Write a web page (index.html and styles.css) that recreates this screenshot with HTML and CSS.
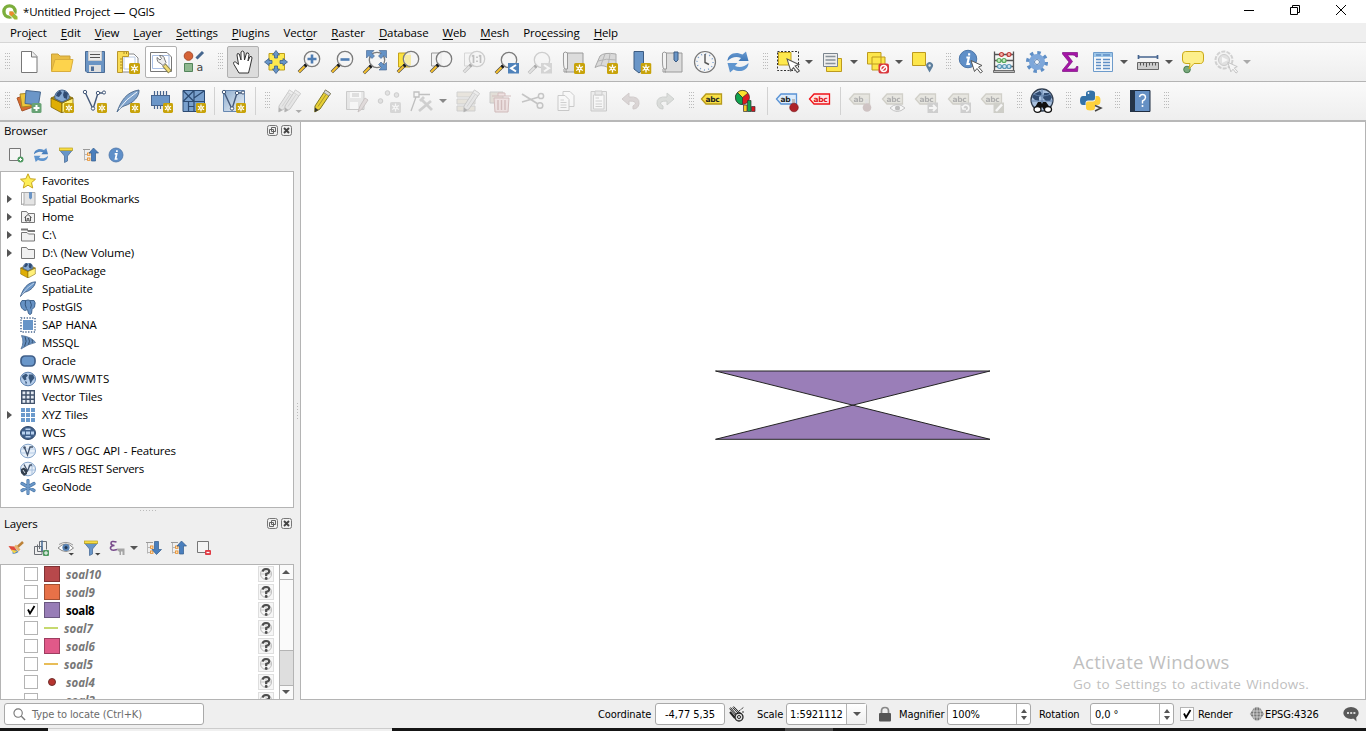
FILE: index.html
```html
<!DOCTYPE html>
<html lang="en">
<head>
<meta charset="utf-8">
<title>*Untitled Project — QGIS</title>
<link rel="stylesheet" href="styles.css">
</head>
<body>
<svg class="defs" width="0" height="0">
  <defs>
    <linearGradient id="gPaper" x1="0" y1="0" x2="1" y2="1"><stop offset="0" stop-color="#8fadcf"/><stop offset="1" stop-color="#eef3f8"/></linearGradient>
    <linearGradient id="gSync" x1="0" y1="0" x2="0" y2="1"><stop offset="0" stop-color="#6a9bd1"/><stop offset="1" stop-color="#3f78b8"/></linearGradient>
  </defs>
  <symbol id="new-badge" viewBox="0 0 11 11"><rect width="11" height="11" rx="1.6" fill="#c8a30a"/><path d="M5.5 1.6v7.8M2.1 3.5l6.8 4M2.1 7.5l6.8-4" stroke="#fff" stroke-width="1.3"/><circle cx="5.5" cy="5.5" r="1.9" fill="#fff"/><circle cx="5.5" cy="5.5" r=".8" fill="#c8a30a"/></symbol>
  <symbol id="lens" viewBox="0 0 24 24"><path d="M8.5 15.500L1.800 22.200" stroke="#444" stroke-width="3.200"/><path d="M7.500 16.500L2 22" stroke="#f6c12e" stroke-width="2"/><path d="M10.500 13.500L8 16" stroke="#111" stroke-width="3.200"/><circle cx="15" cy="9" r="7.700" fill="#f4f4f4" fill-opacity=".85" stroke="#7c7c7c" stroke-width="1.300"/></symbol>
  <symbol id="sync" viewBox="0 0 24 24"><path d="M1.500 11C1.500 4.500 9 .500 16.500 4.500L20 1.500L22.500 11H12.500L15 8C10.500 6 5.500 7 1.500 11Z" fill="url(#gSync)"/><path d="M22.500 13C22.500 19.500 15 23.500 7.500 19.500L4 22.500L1.500 13H11.500L9 16C13.500 18 18.500 17 22.500 13Z" fill="#5f95cf"/></symbol>
  <symbol id="globe" viewBox="0 0 16 16"><ellipse cx="8" cy="8" rx="7.500" ry="6.800" fill="#b5cdea" stroke="#5a7fae"/><path d="M2 5L6 2.500L8 4.500L6 6.500L6.500 8.500L4.500 9.500L2.500 7ZM9 3.500L13 3.500L14.500 7L12 10L10.500 13L9.500 9L8.500 7ZM5 10L7 11L6 14Z" fill="#38577d"/></symbol>
  <symbol id="pencil" viewBox="0 0 24 24"><path d="M5 17L15.500 1L20.500 4.500L10 20L4.800 23Z" fill="#e8cf35" stroke="#7c741f"/><path d="M15.500 1L20.500 4.500L19 7L13.800 3.600Z" fill="#d9d9d9" stroke="#777" stroke-width=".7"/><path d="M4.900 18.500L4.800 23L8.500 21Z" fill="#333"/><path d="M8 17.500L16 5.500" stroke="#a9972a"/></symbol>
  <symbol id="quill" viewBox="0 0 24 24"><path d="M1 23C5 12 10 3 23 1C23.500 7 18 14 8 17C5 18 3.500 20 1 23Z" fill="#7fa3cc" stroke="#4a6789" stroke-width=".9"/><path d="M3 20Q10 10 21 3" stroke="#f4f8fc" fill="none"/></symbol>
  <symbol id="quill-small" viewBox="0 0 16 16"><path d="M.5 15.500C3 8 7 1.500 15.500 .8C15 5 11 9.500 5.500 11C3.500 12 2 13.500 .5 15.500Z" fill="#6d98c9" stroke="#3f5f87" stroke-width=".9"/><path d="M2 13.500Q6 7 14 2" stroke="#cfe0f1" fill="none" stroke-width=".8"/></symbol>
  <symbol id="vee" viewBox="0 0 24 24"><path d="M3 3L11 20L16 4H22" fill="none" stroke="#44597a" stroke-width="1.400"/><g fill="#fff" stroke="#44597a"><circle cx="3" cy="3" r="1.700"/><circle cx="11" cy="19.500" r="1.700"/><circle cx="16" cy="4" r="1.700"/><circle cx="22" cy="3.500" r="1.600"/></g></symbol>
  <symbol id="box" viewBox="0 0 24 24"><path d="M1 9L12 14V24L1 18Z" fill="#dfae05" stroke="#7d6508" stroke-width=".8"/><path d="M12 14L23 9V18L12 24Z" fill="#fff07a" stroke="#7d6508" stroke-width=".8"/><path d="M1 9L12 4L23 9L12 14Z" fill="#a98a12" stroke="#7d6508" stroke-width=".8"/><path d="M4.800 9.500A7.300 7.300 0 1 1 19.200 9.500L12 13Z" fill="#86a9d2" stroke="#46648c"/><path d="M7 4L10 1.500L12 4L9 8L6 7ZM14 2L18 4L17 10L14 9L13 6Z" fill="#304b72"/></symbol>
  <symbol id="label-tag" viewBox="0 0 24 24"><path d="M1.500 10L6 5H21.500V15H6Z" stroke-width="1.300"/></symbol>
  <symbol id="tree-arrow" viewBox="0 0 16 16"><path d="M1.500 2V13.500M1.500 7.500H4.500M1.500 12.500H4.500" stroke="#b5b5b5"/><path d="M0 2.500H7" stroke="#999"/><rect x="4.600" y="6" width="2.300" height="2.300" fill="#fff" stroke="#e8902c"/><rect x="4.600" y="11" width="2.300" height="2.300" fill="#fff" stroke="#e8902c"/></symbol>
  <symbol id="funnel" viewBox="0 0 16 16"><path d="M1.500 3L6.500 9V15.500L9.500 14V9L14.500 3Z" fill="#6795c8" stroke="#4c6f9b" stroke-width=".8"/><rect x="1.500" y="1" width="13" height="2.500" fill="#f7dd45" stroke="#bba01c" stroke-width=".7"/></symbol>
  <symbol id="info" viewBox="0 0 16 16"><circle cx="8" cy="8" r="7" fill="#5f8fc8" stroke="#4b75a8" stroke-width=".8"/><path d="M8.900 3.300v1.800M6.700 6.800H8.700L7.500 12H9.500" fill="none" stroke="#fff" stroke-width="1.700"/></symbol>
  <symbol id="cursor" viewBox="0 0 14 14"><path d="M1 1L12 6L8.500 7.500L12.500 12L10.500 13.500L7 9L4.500 12Z" fill="#fff" stroke="#555" stroke-width="1"/></symbol>
  <symbol id="float" viewBox="0 0 11 11"><rect x=".5" y=".5" width="10" height="10" rx="2" fill="#f0f0f0" stroke="#777"/><path d="M4.500 2.500H8.500V6.500H4.500ZM2.500 4.500H6.500V8.500H2.500Z" fill="none" stroke="#555" stroke-width=".9"/></symbol>
  <symbol id="close" viewBox="0 0 11 11"><rect x=".5" y=".5" width="10" height="10" rx="2" fill="#f0f0f0" stroke="#777"/><path d="M3 3L8 8M8 3L3 8" stroke="#444" stroke-width="1.900"/></symbol>
  <symbol id="no-crs" viewBox="0 0 16 16"><rect x=".5" y=".5" width="15" height="15" fill="#f6f6f6" stroke="#dedede"/><circle cx="8" cy="8" r="5.500" fill="none" stroke="#bbb"/><path d="M2 8H14M8 2V14" stroke="#c6c6c6"/><path d="M4.800 5.700Q5 3 8 3Q11.200 3 11.200 5.500Q11.200 7 8.200 8V10" fill="none" stroke="#4d4d4d" stroke-width="2.200"/><circle cx="8.200" cy="12.500" r="1.400" fill="#4d4d4d"/></symbol>
  <symbol id="folder" viewBox="0 0 16 16"><path d="M1.500 2.500H6.500L8 4.500H14.500V13.500H1.500Z" fill="#f1f1f1" stroke="#777"/></symbol>
  <symbol id="book" viewBox="0 0 24 24"><path d="M5 3H22V22H5Z" fill="#dcdcdc" stroke="#9a9a9a"/><path d="M2.500 3Q4 1 6.500 3V19H4Q2 19 2.500 3Z" fill="#f3f3f3" stroke="#9a9a9a"/><path d="M3 19V22H6" fill="none" stroke="#9a9a9a"/></symbol>
</svg>

<div class="window">
  <header class="titlebar">
    <svg class="logo" viewBox="0 0 16 16"><circle cx="7.500" cy="7.500" r="5.600" fill="none" stroke="#7cae3c" stroke-width="3.400"/><path d="M6.500 6.500H10.500L16 12.500V16H12L6.500 10.500Z" fill="#fff"/><path d="M7.500 7.500H10.500L15.500 12.700V15.500H12.500L7.500 10.500Z" fill="#9bbb35"/><path d="M7.500 7.500H10.500L12.500 9.500L9.500 12.300L7.500 10.500Z" fill="#ec8a2e"/></svg>
    <span class="title">*Untitled Project — QGIS</span>
    <div class="win-buttons">
      <svg viewBox="0 0 12 12"><path d="M1 6.500H11" stroke="#000"/></svg>
      <svg viewBox="0 0 12 12"><path d="M1.500 3.500H8.500V10.500H1.500ZM3.500 3V1.500H10.500V8.500H9" fill="none" stroke="#000"/></svg>
      <svg viewBox="0 0 12 12"><path d="M1 1L11 11M11 1L1 11" stroke="#000"/></svg>
    </div>
  </header>

  <nav class="menubar">
    <span>Pro<u>j</u>ect</span><span><u>E</u>dit</span><span><u>V</u>iew</span><span><u>L</u>ayer</span><span><u>S</u>ettings</span><span><u>P</u>lugins</span><span>Vect<u>o</u>r</span><span><u>R</u>aster</span><span><u>D</u>atabase</span><span><u>W</u>eb</span><span><u>M</u>esh</span><span>Pro<u>c</u>essing</span><span><u>H</u>elp</span>
  </nav>

  <div class="toolbar">
    <i class="grip first"></i>
    <b class="tool"><svg viewBox="0 0 24 24"><path d="M4.500 1.500H15L20 6.500V22.500H4.500Z" fill="#fff" stroke="#777"/><path d="M14.500 1.500V7H20" fill="#eee" stroke="#777"/></svg></b>
    <b class="tool"><svg viewBox="0 0 24 24"><path d="M1.500 21V4H8L10 6H20V10" fill="#e9bd45" stroke="#c9a03a"/><path d="M1.500 21.500L5 9.500H23L20.500 21.500Z" fill="#fdd34c" stroke="#d9ad3c"/></svg></b>
    <b class="tool"><svg viewBox="0 0 24 24"><path d="M2.500 1.500H21.500V22.500H4L2.500 21Z" fill="#6a94c4" stroke="#4c6c94"/><path d="M5.500 1.500H18.500V10.500H5.500Z" fill="#ededed" stroke="#ccc"/><path d="M7 4.500H17M7 7.500H17" stroke="#555"/><path d="M6 15H18V22H6Z" fill="#dfdfdf"/><path d="M8 16.500H11V21H8Z" fill="#4d6d98"/></svg></b>
    <b class="tool"><svg viewBox="0 0 24 24"><path d="M5 4H18L22 8V22H5Z" fill="#fff" stroke="#888"/><path d="M8 7H19V19H8Z" fill="#fff" stroke="#b8c8e0"/><path d="M1.500 1.500H12.500V6.500H6.500V22.500H1.500Z" fill="#f9dc55" stroke="#b8962c"/><path d="M4 9H6.500M4 12H6.500M4 15H6.500M4 18H6.500M8 2V4M10.500 2V4" stroke="#a98a25"/><use href="#new-badge" x="13" y="13" width="11" height="11"/></svg></b>
    <b class="tool framed"><svg viewBox="0 0 24 24"><path d="M1.500 2.500H18L22.500 7V21.500H1.500Z" fill="#fff" stroke="#777"/><path d="M3.500 5.500H20V18.500H3.500Z" fill="none" stroke="#a9bfe4"/><path d="M15 15L21 22" stroke="#8b8452" stroke-width="4.600"/><path d="M15.500 15.500L20.500 21.300" stroke="#f4dd74" stroke-width="2.600"/><path d="M8 7.500L11 10L12.500 8.500L10.500 5.500Q15 5 15.500 9L17 12.500L14 15.500L11 13Q8 12.500 8 7.500Z" fill="#eee" stroke="#777"/></svg></b>
    <b class="tool"><svg viewBox="0 0 24 24"><circle cx="6.500" cy="6" r="4.300" fill="#d56336" stroke="#a8492a"/><path d="M2.500 13.500H10.500V21.500H2.500Z" fill="#8fb88f" stroke="#52845a"/><path d="M14.500 8.500L21 2" stroke="#46678f" stroke-width="3"/><text x="14.500" y="21" class="letter-a">a</text></svg></b>
    <i class="grip"></i>
    <b class="tool pressed"><svg viewBox="0 0 24 24"><path d="M8 23L3 14.500Q1.500 11.500 4.500 12L7.500 14.500L6 5Q6 2.500 8.300 4L10 10V2Q11.500 0 13 2L13.500 10L15.500 3Q17.500 2 18 4.500L17 11L19 6.500Q21 6 21 8L19 17L17.500 23Z" fill="#fff" stroke="#333"/></svg></b>
    <b class="tool"><svg viewBox="0 0 24 24"><path d="M5 3.500H20.500V20H5Z" fill="#fde94e" stroke="#bd9e1b"/><g fill="#6795c8" stroke="#3d5f89" stroke-width=".8"><path d="M12 .5L15.500 5H13.500V8H10.500V5H8.500Z"/><path d="M12 23.500L8.500 19H10.500V16H13.500V19H15.500Z"/><path d="M.5 12L5 8.500V10.500H8V13.500H5V15.500Z"/><path d="M23.500 12L19 15.500V13.500H16V10.500H19V8.500Z"/></g></svg></b>
    <b class="tool"><svg viewBox="0 0 24 24"><use href="#lens"/><path d="M15 4.500V13.500M10.500 9H19.500" stroke="#4f7db3" stroke-width="2.600"/></svg></b>
    <b class="tool"><svg viewBox="0 0 24 24"><use href="#lens"/><path d="M10.500 9.500H19.500" stroke="#4f7db3" stroke-width="2.600"/></svg></b>
    <b class="tool"><svg viewBox="0 0 24 24"><use href="#lens" x="-1" y="1"/><g fill="#6492c6" stroke="#3f628f" stroke-width=".6"><path d="M3.500 .5H11L8.500 3L11.500 6L9 8.500L6 5.500L3.500 8Z"/><path d="M23.500 .5V8L21 5.500L18 8.500L15.500 6L18.500 3L16 .5Z"/><path d="M23.500 20H16L18.500 17.500L15.500 14.500L18 12L21 15L23.500 12.500Z"/></g></svg></b>
    <b class="tool"><svg viewBox="0 0 24 24"><path d="M2.500 3H14V17H2.500Z" fill="#fce33e" stroke="#c5a21c"/><use href="#lens"/><path d="M9 5H15V15.500Q11 14 9 12Z" fill="#f6ea96" opacity=".8"/></svg></b>
    <b class="tool"><svg viewBox="0 0 24 24"><path d="M2.500 3H12V16H2.500Z" fill="#f3f3f3" stroke="#999"/><use href="#lens"/></svg></b>
    <b class="tool"><svg class="off" viewBox="0 0 24 24"><path d="M2.500 3H12V16H2.500Z" fill="#f3f3f3" stroke="#999"/><use href="#lens" class="gray"/><path d="M11.500 5V13M10 6.500L11.500 5M18.500 5V13M17 6.500L18.500 5M15 6.500V8M15 10.500V12" stroke="#555" stroke-width="1.700"/></svg></b>
    <b class="tool"><svg viewBox="0 0 24 24"><use href="#lens" x="-1" y="1"/><path d="M13 13H24V23.500H13Z" fill="#4f82ba"/><path d="M21 15L16 18.200L21 21.500" fill="none" stroke="#fff" stroke-width="2"/></svg></b>
    <b class="tool"><svg class="off" viewBox="0 0 24 24"><use href="#lens" class="gray" x="-1" y="1"/><path d="M13 13H24V23.500H13Z" fill="#999"/><path d="M16 15L21 18.200L16 21.500" fill="none" stroke="#fff" stroke-width="2"/></svg></b>
    <b class="tool"><svg viewBox="0 0 24 24"><use href="#book"/><use href="#new-badge" x="13" y="13" width="11" height="11"/></svg></b>
    <b class="tool"><svg viewBox="0 0 24 24"><path d="M6 6Q10 2 22 4V17H13Q7 14 1 17.500Z" fill="#d9d9d9" stroke="#aaa"/><path d="M4 11Q12 8 22 10M11 4L7 15M16 4L14 16" stroke="#b5b5b5" fill="none"/><use href="#new-badge" x="13" y="13" width="11" height="11"/></svg></b>
    <b class="tool"><svg viewBox="0 0 24 24"><path d="M7 1.500H16.500V19L12 23L7 19Z" fill="#6a96c8" stroke="#3d5c82"/><use href="#new-badge" x="13.500" y="13" width="11" height="11"/></svg></b>
    <b class="tool"><svg viewBox="0 0 24 24"><use href="#book"/><path d="M14 2H18V10L16 12L14 10Z" fill="#6a96c8" stroke="#3d5c82"/></svg></b>
    <b class="tool"><svg viewBox="0 0 24 24"><circle cx="12" cy="12" r="10.500" fill="#f5f5f5" stroke="#777" stroke-width="1.200"/><circle cx="12" cy="12" r="8" fill="none" stroke="#7aa0cf" stroke-width="1.500" stroke-dasharray="1 3.190"/><path d="M12 4V12.500L16 14.500" fill="none" stroke="#555" stroke-width="1.400"/></svg></b>
    <b class="tool"><svg viewBox="0 0 24 24"><use href="#sync"/></svg></b>
    <i class="grip g17"></i>
    <b class="tool drop"><svg viewBox="0 0 24 24"><path d="M1.500 1.500H22.500V20.500H1.500Z" fill="none" stroke="#333" stroke-dasharray="2 1.500"/><path d="M2.500 2.500H15V15H2.500Z" fill="#fee94e" stroke="#c3a11a"/><use href="#cursor" x="10" y="8" width="15" height="15"/></svg></b>
    <b class="tool drop"><svg viewBox="0 0 24 24"><path d="M5.500 8.500H20.500V21.500H5.500Z" fill="#fde64b" stroke="#bd9a1e"/><path d="M2.500 3.500H16.500V16.500H2.500Z" fill="#eee" stroke="#7b858e"/><path d="M4.500 6.500H14.500M4.500 10H14.500M4.500 13.500H14.500" stroke="#88929a" stroke-width="1.500"/></svg></b>
    <b class="tool drop"><svg viewBox="0 0 24 24"><path d="M1.500 2.500H15V14H1.500ZM6 7H19V20H6Z" fill="#fde64b" stroke="#bd9a1e"/><rect x="12.500" y="13.500" width="10.500" height="10" rx="2" fill="#d9363c"/><circle cx="17.700" cy="18.500" r="3" fill="none" stroke="#fff" stroke-width="1.400"/><path d="M15.800 20.500L19.800 16.500" stroke="#fff" stroke-width="1.300"/></svg></b>
    <b class="tool"><svg viewBox="0 0 24 24"><path d="M1.500 2.500H14.500V15.500H1.500Z" fill="#fde64b" stroke="#bd9a1e"/><path d="M18.500 22.500L15.800 17.500A3.400 3.400 0 1 1 21.400 17.500Z" fill="#5e7f9d"/><circle cx="18.600" cy="15.500" r="1.200" fill="#dfe8f0"/></svg></b>
    <i class="grip g15"></i>
    <b class="tool"><svg viewBox="0 0 24 24"><use href="#info" x="-1" y="-1" width="20" height="20"/><use href="#cursor" x="11" y="9" width="14" height="15"/></svg></b>
    <b class="tool"><svg viewBox="0 0 24 24"><path d="M2.500 1.500V21M21.500 1.500V21M2.500 4.500H21.500M2.500 10.500H21.500M2.500 16.500H21.500" stroke="#555" stroke-width="1.300"/><path d="M1.500 20.500H22.500V22.500H1.500Z" fill="#bbb" stroke="#555" stroke-width=".8"/><g stroke-width="1.200"><g fill="#f2b0a8" stroke="#bd3a38"><circle cx="9.500" cy="4.500" r="2"/><circle cx="17" cy="4.500" r="2"/></g><g fill="#c5ecc0" stroke="#58a95c"><circle cx="7" cy="10.500" r="2"/><circle cx="12" cy="10.500" r="2"/></g><g fill="#cfe4f2" stroke="#5997b7"><circle cx="7.500" cy="16.500" r="2"/><circle cx="12.500" cy="16.500" r="2"/><circle cx="17" cy="16.500" r="2"/></g></g></svg></b>
    <b class="tool"><svg viewBox="0 0 24 24"><circle cx="12" cy="12" r="8.800" fill="none" stroke="#5e8ec6" stroke-width="4.500" stroke-dasharray="3.200 3.710"/><circle cx="12" cy="12" r="5.500" fill="none" stroke="#7ea7da" stroke-width="5"/><circle cx="12" cy="12" r="2.500" fill="#f4f6fa" stroke="#5b83b5"/></svg></b>
    <b class="tool"><svg viewBox="0 0 24 24"><path d="M4.500 2.500H19.500V7H18Q17 5 15 5H9.500L14.500 11.500L8.500 19H16Q18 19 18.500 16.500H20L19.500 21.500H4.500V20L11 12L4.500 4Z" fill="#a616a6" stroke="#7c1084" stroke-width=".7"/></svg></b>
    <b class="tool drop"><svg viewBox="0 0 24 24"><path d="M2.500 2.500H21.500V21.500H2.500Z" fill="#f4f7fa" stroke="#6d9bcb"/><path d="M3 3H21V7H3Z" fill="#9dc6e8"/><path d="M5 5H10M12 5H19M5 9.500H10M5 12.500H10M5 15.500H10M5 18.500H10M12 9.500H19M12 12.500H19M12 15.500H19M12 18.500H19" stroke="#5f8fc5" stroke-width="1.300"/></svg></b>
    <b class="tool drop"><svg viewBox="0 0 24 24"><path d="M2.500 7H21.500M2.500 5V9M21.500 5V9" stroke="#45648f" stroke-width="1.700"/><path d="M1.500 12.500H22.500V19.500H1.500Z" fill="#ccc" stroke="#666"/><path d="M4.500 13V15.500M7.500 13V15.500M10.500 13V17M13.500 13V15.500M16.500 13V15.500M19.500 13V15.500" stroke="#555"/></svg></b>
    <b class="tool"><svg viewBox="0 0 24 24"><circle cx="6" cy="19.500" r="3.300" fill="#79a97c" stroke="#4a7d50"/><path d="M4.500 1.500H19.500Q22.500 1.500 22.500 5V9Q22.500 13.500 19.500 13.500H13L8 19L9 13.500H5Q1.500 13.500 1.500 10V5Q1.500 1.500 4.500 1.500Z" fill="#fdef8b" stroke="#caa918"/></svg></b>
    <b class="tool drop dim"><svg class="off" viewBox="0 0 24 24"><circle cx="10" cy="10" r="8.500" fill="#eee" stroke="#888" stroke-width="2" stroke-dasharray="4 1.300"/><circle cx="10" cy="10" r="5.500" fill="#bbb" stroke="#777"/><path d="M8 7L14 10L8 13Z" fill="#fff"/><use href="#cursor" x="13" y="11" width="12" height="13"/></svg></b>
  </div>

  <div class="toolbar second">
    <i class="grip first"></i>
    <b class="tool"><svg viewBox="0 0 24 24"><path d="M0 9L12 5L16 18L5 22Z" fill="#d96c2d" stroke="#a85429"/><path d="M3 5L14 4V17L5 18Z" fill="#edc53b" stroke="#a88725"/><path d="M9 1.500L23.500 3L21.500 16L8 14.500Z" fill="#6b96c8" stroke="#47688f"/><rect x="14.500" y="14" width="10" height="10" rx="1.500" fill="#68a375"/><path d="M19.500 16V22M16.500 19H22.500" stroke="#fff" stroke-width="2"/></svg></b>
    <b class="tool"><svg viewBox="0 0 24 24"><use href="#box"/><use href="#new-badge" x="14" y="14" width="10" height="10"/></svg></b>
    <b class="tool"><svg viewBox="0 0 24 24"><use href="#vee" x="-1"/><use href="#new-badge" x="14" y="14" width="10" height="10"/></svg></b>
    <b class="tool"><svg viewBox="0 0 24 24"><use href="#quill"/><use href="#new-badge" x="14" y="14" width="10" height="10"/></svg></b>
    <b class="tool"><svg viewBox="0 0 24 24"><path d="M5.500 2V20M8.500 2V20M11.500 2V20M14.500 2V20M17.500 2V20" stroke="#46648e" stroke-width="1.200"/><rect x="2.500" y="6.500" width="18" height="10" fill="#6b96c8" stroke="#46648e"/><use href="#new-badge" x="14" y="14" width="10" height="10"/></svg></b>
    <b class="tool"><svg viewBox="0 0 24 24"><path d="M1 1.500H22.500V22.500H1Z" fill="#79a0cd" stroke="#2c4a72"/><path d="M1 12.500H22.500M12 1V23M1 1.500L12 12.500M12 1.500L1 12.500M12 9L22 2M6.500 12.500V22.500M6.500 17.500H12" fill="none" stroke="#2c4a72" stroke-width="1.200"/><use href="#new-badge" x="14" y="14" width="10" height="10"/></svg></b>
    <i class="sep"></i>
    <b class="tool"><svg viewBox="0 0 24 24"><path d="M1.500 1.500H22.500V22.500H1.500Z" fill="url(#gPaper)" stroke="#6687b0"/><use href="#vee" x="-1"/><use href="#new-badge" x="14" y="14" width="10" height="10"/></svg></b>
    <i class="sep tail"></i><i class="grip g17"></i>
    <b class="tool"><svg class="off" viewBox="0 0 24 24"><g class="gray"><use href="#pencil" x="-4"/><use href="#pencil" x="2"/></g><path d="M17.500 21H24L20.700 24Z" fill="#222"/></svg></b>
    <b class="tool"><svg viewBox="0 0 24 24"><use href="#pencil" x="-1"/></svg></b>
    <b class="tool"><svg class="off" viewBox="0 0 24 24"><path d="M2.500 2.500H20V20.500H2.500Z" fill="#ccc" stroke="#777"/><path d="M6 3H17V9H6Z" fill="#fff"/><path d="M8 5H15M8 7H15" stroke="#666"/><path d="M6 13H14V20H6Z" fill="#fff"/><path d="M14 23L16 17L21 9L24 11L18 20Z" fill="#baa" stroke="#766"/></svg></b>
    <b class="tool"><svg class="off" viewBox="0 0 24 24"><g fill="#bbb" stroke="#777"><circle cx="3.500" cy="12" r="2.300"/><circle cx="10.500" cy="4" r="2.300"/><circle cx="19.500" cy="6" r="2.300"/></g><use class="gray" href="#new-badge" x="13" y="13" width="11" height="11"/></svg></b>
    <b class="tool drop"><svg class="off" viewBox="0 0 24 24"><path d="M4 3H9V8H4ZM9 5.500H20M6 8L1 22" fill="none" stroke="#555" stroke-width="1.300"/><path d="M11 10L22 21M21 12L9 22M10 12L14 8" stroke="#888" stroke-width="2.800"/></svg></b>
    <b class="tool"><svg class="off" viewBox="0 0 24 24"><path d="M2 3H20V8H2ZM2 10H20V15H2ZM2 17H20V22H2Z" fill="#ccc2ab" stroke="#888"/><use class="gray" href="#pencil" x="4"/></svg></b>
    <b class="tool"><svg class="off" viewBox="0 0 24 24"><path d="M2 3H15V14H2Z" fill="#bbb09a" stroke="#777"/><path d="M4 7H23M10 7V4H17V7M6 9H21L20 23H7Z" fill="#e0bcbc" stroke="#8f4f4f"/><path d="M10 11V21M13.500 11V21M17 11V21" stroke="#8f4f4f" stroke-width="1.400"/></svg></b>
    <b class="tool"><svg class="off" viewBox="0 0 24 24"><path d="M1 5L17 15M1 13L18 8" stroke="#666" stroke-width="1.700"/><circle cx="20" cy="7" r="2.600" fill="none" stroke="#666" stroke-width="1.500"/><circle cx="19" cy="16.500" r="2.800" fill="none" stroke="#666" stroke-width="1.500"/></svg></b>
    <b class="tool"><svg class="off" viewBox="0 0 24 24"><path d="M9 2.500H16L20 6.500V17.500H9Z" fill="#fff" stroke="#777"/><path d="M4 6.500H11L15 10.500V21.500H4Z" fill="#fff" stroke="#777"/><path d="M6.500 11H10M6.500 13.500H12.500M6.500 16H12.500M6.500 18.500H12.500" stroke="#888"/></svg></b>
    <b class="tool"><svg class="off" viewBox="0 0 24 24"><path d="M4 2.500H19.500V22H4Z" fill="#ddd" stroke="#777"/><path d="M6.500 6H17V20H6.500Z" fill="#fff" stroke="#888"/><path d="M8 2H15V6H8Z" fill="#ccc" stroke="#777"/><path d="M8.500 9H12M8.500 12H15M8.500 15H15M8.500 17.500H15" stroke="#888"/></svg></b>
    <b class="tool"><svg class="off" viewBox="0 0 24 24"><path d="M2 10L9 4V8Q20 7 19 15Q18 20 13 20V17Q17 15 15 13Q13 12 9 12V16Z" fill="#a89898" stroke="#877"/></svg></b>
    <b class="tool"><svg class="off" viewBox="0 0 24 24"><path d="M21 10L14 4V8Q3 7 4 15Q5 20 10 20V17Q6 15 8 13Q10 12 14 12V16Z" fill="#aab0aa" stroke="#7d8680"/></svg></b>
    <i class="grip g14"></i>
    <b class="tool"><svg viewBox="0 0 24 24"><use href="#label-tag" fill="#f8df45" stroke="#b79b1e"/><text class="abc" x="5.500" y="12.800">abc</text></svg></b>
    <b class="tool"><svg viewBox="0 0 24 24"><g stroke="#333" stroke-width=".7" transform="translate(1 0)"><circle cx="8.500" cy="8.500" r="7" fill="#dc1b22"/><path d="M8.500 8.500L3.500 3.500A7 7 0 0 1 14 4Z" fill="#fce22d"/><path d="M8.500 8.500L3.500 3.500A7 7 0 0 0 8.500 15.500Z" fill="#10a450"/><path d="M9.500 16H13V22.500H9.500Z" fill="#fbc921"/><path d="M13.500 11.500H17V22.500H13.500Z" fill="#12a350"/><path d="M17.500 17.500H21V22.500H17.500Z" fill="#d8151e"/></g></svg></b>
    <i class="sep wide"></i>
    <b class="tool"><svg viewBox="0 0 24 24"><use href="#label-tag" fill="#dcebfb" stroke="#5a93d5"/><text class="abc" x="5.500" y="12.800">ab</text><path d="M18.500 10V17" stroke="#bbb" stroke-width="3"/><circle cx="19" cy="18.500" r="4.300" fill="#ad2329" stroke="#77171b" stroke-width=".6"/></svg></b>
    <b class="tool"><svg viewBox="0 0 24 24"><use href="#label-tag" fill="#ffe4e4" stroke="#f01218"/><text class="abc red" x="5.500" y="12.800">abc</text></svg></b>
    <i class="sep"></i>
    <b class="tool"><svg class="off" viewBox="0 0 24 24"><use href="#label-tag" fill="#c9c7b5" stroke="#888570"/><text class="abc" x="5.500" y="12.800">ab</text><path d="M18.500 10V17" stroke="#bbb" stroke-width="3"/><circle cx="19" cy="18.500" r="4.300" fill="#866"/></svg></b>
    <b class="tool"><svg class="off" viewBox="0 0 24 24"><use href="#label-tag" fill="#c9c7b5" stroke="#888570"/><text class="abc" x="5.500" y="12.800">abc</text><path d="M9 19Q16 12 24 19Q16 26 9 19Z" fill="#fff" stroke="#666"/><circle cx="16.500" cy="19" r="2.500" fill="#555"/></svg></b>
    <b class="tool"><svg class="off" viewBox="0 0 24 24"><use href="#label-tag" fill="#c9c7b5" stroke="#888570"/><text class="abc" x="5.500" y="12.800">abc</text><path d="M13.500 13.500H24V24H13.500Z" fill="#888"/><path d="M15 19H22M19 16L22 19L19 22" fill="none" stroke="#fff" stroke-width="2"/></svg></b>
    <b class="tool"><svg class="off" viewBox="0 0 24 24"><use href="#label-tag" fill="#c9c7b5" stroke="#888570"/><text class="abc" x="5.500" y="12.800">abc</text><path d="M13.500 13.500H24V24H13.500Z" fill="#888"/><path d="M16 20A3 3 0 1 1 19 22M15 17L16 20H19" fill="none" stroke="#fff" stroke-width="1.600"/></svg></b>
    <b class="tool"><svg class="off" viewBox="0 0 24 24"><use href="#label-tag" fill="#c9c7b5" stroke="#888570"/><text class="abc" x="5.500" y="12.800">abc</text><path d="M13.500 13.500H24V24H13.500Z" fill="#887"/><path d="M16 22L22 15.500" stroke="#fff" stroke-width="2.500"/></svg></b>
    <i class="grip g17"></i>
    <b class="tool"><svg viewBox="0 0 24 24"><circle cx="12" cy="11" r="11" fill="#a9c1df" stroke="#333f50" stroke-width="1.300"/><path d="M4 5L10 2L12 5L9 8L9 12L5 11L2 8ZM14 4H19L22 8L20 12H16L13 9Z" fill="#304b70"/><path d="M1 12H23M12 0V18M3 5Q12 9 21 5" stroke="#5f7fa8" fill="none"/><path d="M4 20L8 13H11L12 15L13 13H16L21 20L14 21L12 18L10 21Z" fill="#111"/><ellipse cx="7.500" cy="20.500" rx="3.500" ry="2.800" fill="#fff" stroke="#111" stroke-width="1.300"/><ellipse cx="18" cy="20.500" rx="3.500" ry="2.800" fill="#fff" stroke="#111" stroke-width="1.300"/></svg></b>
    <i class="grip"></i>
    <b class="tool"><svg viewBox="0 0 24 24"><path d="M7 7V4Q7 1.500 11.500 1.500Q16 1.500 16 4V9Q16 11.500 13.500 11.500H9Q6.500 11.500 6.500 14V16H4Q1 16 1 11.500Q1 7 4 7Z" fill="#3472a8"/><path d="M16.500 7H18.500Q21.500 7 21.500 11.500Q21.500 16 18.500 16H16V19Q16 21.500 11.500 21.500Q7 21.500 7 19V14.500Q7 12.500 9 12.500H14Q16.500 12.500 16.500 9Z" fill="#fdd13c"/><circle cx="9.500" cy="4" r=".9" fill="#fff"/><path d="M16 16.500L22 19L16 22" fill="none" stroke="#444" stroke-width="1.500"/></svg></b>
    <i class="grip"></i>
    <b class="tool"><svg viewBox="0 0 24 24"><path d="M2.500 1.500H22V22.500H2.500Z" fill="#6590c4" stroke="#1f2d40"/><path d="M2 1H7V23H2Z" fill="#253447"/><path d="M11.500 8Q12 5.500 14.500 5.500Q17.500 5.500 17.500 8.500Q17.500 10.500 14.500 12V14.500" fill="none" stroke="#fff" stroke-width="1.400"/><circle cx="14.500" cy="17" r="1" fill="#fff"/></svg></b>
    <i class="grip"></i>
  </div>

  <main class="workspace">
    <aside class="docks">
      <section class="dock browser">
        <h2 class="dock-title"><span>Browser</span><svg viewBox="0 0 11 11"><use href="#float"/></svg><svg viewBox="0 0 11 11"><use href="#close"/></svg></h2>
        <div class="dock-tools">
          <svg viewBox="0 0 16 16"><path d="M1.500 1.500H12.500V13.500H1.500Z" fill="#f5f5f5" stroke="#777"/><circle cx="12.500" cy="12.500" r="3" fill="#4f9a61"/><path d="M12.500 11V14M11 12.500H14" stroke="#fff"/></svg>
          <svg viewBox="0 0 16 16"><use href="#sync" width="16" height="16"/></svg>
          <svg viewBox="0 0 16 16"><use href="#funnel"/></svg>
          <svg viewBox="0 0 16 16"><use href="#tree-arrow"/><path d="M10.500 1L15.500 6H12.500V14H8.500V6H6Z" fill="#4a7fbd" stroke="#315b8c" stroke-width=".7"/></svg>
          <svg viewBox="0 0 16 16"><use href="#info"/></svg>
        </div>
        <ul class="tree">
          <li><i></i><svg viewBox="0 0 16 16"><path d="M8 .8L10.200 5.700L15.500 6.200L11.500 9.700L12.700 15L8 12.200L3.300 15L4.500 9.700L.5 6.200L5.800 5.700Z" fill="#fdee58" stroke="#c7a41b"/></svg><span>Favorites</span></li>
          <li><i class="closed"></i><svg viewBox="0 0 16 16"><path d="M3 1.500H15V14H3Z" fill="#e4e4e4" stroke="#aaa"/><path d="M1.500 1.500H4V13Q2 12.500 1.500 14Z" fill="#fff" stroke="#aaa"/><path d="M9 1H12V7L10.500 8.500L9 7Z" fill="#6a94c4"/></svg><span>Spatial Bookmarks</span></li>
          <li><i class="closed"></i><svg viewBox="0 0 16 16"><use href="#folder"/><path d="M4.500 8.500L8 5.500L11.500 8.500M5.500 8V12H7.200V9.500H8.800V12H10.500V8" fill="none" stroke="#444" stroke-width=".9"/></svg><span>Home</span></li>
          <li><i class="closed"></i><svg viewBox="0 0 16 16"><path d="M1.500 5.500H7L8.500 7H14.500V14H1.500Z" fill="#f1f1f1" stroke="#777"/><path d="M1 1.500H8V3H15V5H8L7 3.500H1Z" fill="#777"/></svg><span>C:\</span></li>
          <li><i class="closed"></i><svg viewBox="0 0 16 16"><use href="#folder"/></svg><span>D:\ (New Volume)</span></li>
          <li><i></i><svg viewBox="0 0 16 16"><use href="#box" width="16" height="16" y="-1"/></svg><span>GeoPackage</span></li>
          <li><i></i><svg viewBox="0 0 16 16"><use href="#quill-small"/></svg><span>SpatiaLite</span></li>
          <li><i></i><svg viewBox="0 0 16 16"><path d="M2 1.500H6Q8 .5 10 1.500H14Q16 3 14.500 8L12 10.500L11.500 14.500Q10 16.500 8.500 14.500L7.500 10.500L5 11.500Q.5 10 .5 4Z" fill="#6792c4" stroke="#41658f"/><path d="M5.500 2Q4.500 6 6.500 9.500M10 2Q12.500 6 10.500 9.500" fill="none" stroke="#34567d"/></svg><span>PostGIS</span></li>
          <li><i></i><svg viewBox="0 0 16 16"><path d="M1 1H15V15H1Z" fill="none" stroke="#46658e" stroke-width="1.500" stroke-dasharray="1.300 1.500"/><path d="M3 3H13V13H3Z" fill="#6795c8"/></svg><span>SAP HANA</span></li>
          <li><i></i><svg viewBox="0 0 16 16"><path d="M1.500 .5Q12 2 15.500 7.500Q8 9 1 14Q4.500 7 1.500 .5Z" fill="#6690c0" stroke="#4f7098" stroke-width=".8"/><path d="M5 1.500Q7.500 6 4.500 11.500M8.500 3Q10.500 6 8.500 9.500M12 4.500Q13 6.500 12 8" fill="none" stroke="#35506f"/></svg><span>MSSQL</span></li>
          <li><i></i><svg viewBox="0 0 16 16"><rect x="1" y="3" width="14" height="10" rx="4" fill="#6a97ca" stroke="#41608a" stroke-width="1.700"/></svg><span>Oracle</span></li>
          <li><i></i><svg viewBox="0 0 16 16"><use href="#globe"/></svg><span class="caps">WMS/WMTS</span></li>
          <li><i></i><svg viewBox="0 0 16 16"><path d="M1 1H15V15H1Z" fill="#42536c"/><path d="M2.500 2.500H5.300V5.300H2.500ZM6.700 2.500H9.500V5.300H6.700ZM10.900 2.500H13.700V5.300H10.900ZM2.500 6.700H5.300V9.500H2.500ZM6.700 6.700H9.500V9.500H6.700ZM10.900 6.700H13.700V9.500H10.900ZM2.500 10.900H5.300V13.700H2.500ZM6.700 10.900H9.500V13.700H6.700ZM10.900 10.900H13.700V13.700H10.900Z" fill="#e4eaf2"/></svg><span>Vector Tiles</span></li>
          <li><i class="closed"></i><svg viewBox="0 0 16 16"><path d="M1 1H5V5H1ZM6 1H10V5H6ZM11 1H15V5H11ZM1 6H5V10H1ZM6 6H10V10H6ZM11 6H15V10H11ZM1 11H5V15H1ZM6 11H10V15H6ZM11 11H15V15H11Z" fill="#6b9acc"/></svg><span>XYZ Tiles</span></li>
          <li><i></i><svg viewBox="0 0 16 16"><ellipse cx="8" cy="8" rx="7.500" ry="6.500" fill="#3f5f8a" stroke="#30486b"/><path d="M5.500 3.500H10.500V5H5.500ZM2 6.500H5V9.500H2ZM6 6.500H10V9.500H6ZM11 6.500H14V9.500H11ZM5.500 11H10.500V12.500H5.500Z" fill="#b9d2ef"/></svg><span>WCS</span></li>
          <li><i></i><svg viewBox="0 0 16 16"><ellipse cx="8" cy="8" rx="7.500" ry="6.800" fill="#e8f0f9" stroke="#83a3c9"/><path d="M1 6H15M1 10H15" stroke="#b4cbe6"/><path d="M4.500 4.500L7.500 12L10 4H13" fill="none" stroke="#42536c" stroke-width="1.300"/><circle cx="4.500" cy="4.500" r="1.300" fill="#42536c"/></svg><span>WFS / OGC API - Features</span></li>
          <li><i></i><svg viewBox="0 0 16 16"><ellipse cx="8" cy="8" rx="7.500" ry="6.800" fill="#e8f0f9" stroke="#83a3c9"/><path d="M8 5H15M8 9H15M12 2V14" stroke="#a8c0dd"/><path d="M4 3.500L7.500 10L10 4H12" fill="none" stroke="#42536c" stroke-width="1.300"/><path d="M1 8L4 6.500L7 9V13L4 15L1 12Z" fill="#34404f"/><path d="M3 9L5 12" stroke="#cfd8e4"/></svg><span class="snug">ArcGIS REST Servers</span></li>
          <li><i></i><svg viewBox="0 0 16 16"><path d="M8 1.500V14.500M2 4.500L14 11.500M2 11.500L14 4.500" stroke="#4f7cac" stroke-width="3.200" stroke-linecap="round"/><path d="M8 1.500V14.500M2 4.500L14 11.500M2 11.500L14 4.500" stroke="#6c98c8" stroke-width="2" stroke-linecap="round"/></svg><span>GeoNode</span></li>
        </ul>
      </section>
      <div class="splitter"><i></i></div>
      <section class="dock layers">
        <h2 class="dock-title"><span>Layers</span><svg viewBox="0 0 11 11"><use href="#float"/></svg><svg viewBox="0 0 11 11"><use href="#close"/></svg></h2>
        <div class="dock-tools">
          <svg viewBox="0 0 16 16"><path d="M9 7.500L15 2" stroke="#bd8237" stroke-width="2.500"/><path d="M8 4.500L12.500 9.500L10.500 11.500L6 6.500Z" fill="#e8b56e"/><path d="M5 6.500L10.500 12Q7 14.500 4.500 13.500Z" fill="#4c81bd"/><path d="M6 6.500L.5 6L3.500 10.500L8.500 10Z" fill="#e04a3b"/><path d="M3 9.500L9.500 11L6 13.500Z" fill="#f6d044"/></svg>
          <svg viewBox="0 0 16 16"><path d="M6.500 1.500H13.500V9.500M4.500 4.500V11.500H11M6.500 1.500V9M1.500 6.500V14.500H9V6.500Z" fill="none" stroke="#6b6f75"/><path d="M9 .5V11" stroke="#466a94" stroke-width="1.500"/><rect x="10" y="10" width="6" height="6" rx="1" fill="#4f9a61"/><path d="M13 11V15M11 13H15" stroke="#fff"/></svg>
          <svg viewBox="0 0 16 16"><path d="M0 8Q8 0 15.500 8Q8 15 0 8Z" fill="#fff" stroke="#888"/><circle cx="8" cy="7.500" r="3.600" fill="#5681b3"/><circle cx="8" cy="7.500" r="1.500" fill="#253850"/><path d="M1 4.500Q8 0 15 5" fill="none" stroke="#999"/><path d="M10.500 13H16L13.300 15.500Z" fill="#444"/></svg>
          <svg class="wide" viewBox="0 0 18 16"><use href="#funnel" width="16" height="16"/><path d="M12 13H17.500L14.700 15.500Z" fill="#444"/></svg>
          <svg viewBox="0 0 16 16"><path d="M7.500 2Q2 .5 2 3.300Q2 5.500 5.500 5.500Q1 6 1.500 8.500Q2.500 11.300 8 9.500" fill="none" stroke="#774a8a" stroke-width="1.600"/><path d="M8 8.500H15.500V15H13.500V11.500H12V15H10.500V12L8 10Z" fill="#a5a5a5"/></svg>
          <i class="caret"></i>
          <svg viewBox="0 0 16 16"><use href="#tree-arrow"/><path d="M10.500 14.500L15.500 9.500H12.500V1.500H8.500V9.500H6Z" fill="#4a7fbd" stroke="#315b8c" stroke-width=".7"/></svg>
          <svg viewBox="0 0 16 16"><use href="#tree-arrow"/><path d="M10.500 1L15.500 6H12.500V14H8.500V6H6Z" fill="#4a7fbd" stroke="#315b8c" stroke-width=".7"/></svg>
          <svg viewBox="0 0 16 16"><path d="M1.500 1.500H12.500V12.500H1.500Z" fill="#f5f5f5" stroke="#777"/><rect x="9" y="10" width="6" height="5" rx="1" fill="#e03a44"/><path d="M10.500 12.500H13.500" stroke="#fff" stroke-width="1.300"/></svg>
        </div>
        <div class="layer-panel">
          <ul class="layer-list">
            <li><i class="check"></i><i class="swatch c10"></i><span>soal10</span><svg viewBox="0 0 16 16"><use href="#no-crs"/></svg></li>
            <li><i class="check"></i><i class="swatch c9"></i><span>soal9</span><svg viewBox="0 0 16 16"><use href="#no-crs"/></svg></li>
            <li class="active"><i class="check"><svg viewBox="0 0 12 12"><path d="M3 5.500L5 9.500L9.500 2" fill="none" stroke="#000" stroke-width="1.800"/></svg></i><i class="swatch c8"></i><span>soal8</span><svg viewBox="0 0 16 16"><use href="#no-crs"/></svg></li>
            <li><i class="check"></i><i class="stroke s7"></i><span>soal7</span><svg viewBox="0 0 16 16"><use href="#no-crs"/></svg></li>
            <li><i class="check"></i><i class="swatch c6"></i><span>soal6</span><svg viewBox="0 0 16 16"><use href="#no-crs"/></svg></li>
            <li><i class="check"></i><i class="stroke s5"></i><span>soal5</span><svg viewBox="0 0 16 16"><use href="#no-crs"/></svg></li>
            <li><i class="check"></i><i class="point"></i><span>soal4</span><svg viewBox="0 0 16 16"><use href="#no-crs"/></svg></li>
            <li><i class="check"></i><i class="none"></i><span>soal3</span><svg viewBox="0 0 16 16"><use href="#no-crs"/></svg></li>
          </ul>
          <div class="scrollbar"><i class="up"></i><i class="thumb"></i><i class="down"></i></div>
        </div>
      </section>
    </aside>
    <div class="v-splitter"><i></i></div>
    <section class="canvas">
      <svg class="map" viewBox="301 122 1064 577"><path d="M715.500 371L990 371L715.500 439.300L990 439.300Z" fill="#9a7eb8" stroke="#232323" stroke-linejoin="bevel"/></svg>
      <div class="watermark"><p class="w1">Activate Windows</p><p class="w2">Go to Settings to activate Windows.</p></div>
    </section>
  </main>

  <footer class="statusbar">
    <div class="locator"><svg viewBox="0 0 14 14"><circle cx="5.500" cy="5.500" r="4.500" fill="none" stroke="#777" stroke-width="1.200"/><path d="M9 9L13 13" stroke="#777" stroke-width="1.500"/></svg><span>Type to locate (Ctrl+K)</span></div>
    <span class="s-coord">Coordinate</span>
    <div class="field coord"><span>-4,77 5,35</span></div>
    <svg class="extent" viewBox="0 0 16 16"><path d="M1 2L8 10M4 1L11 8M1 6L6 12" stroke="#222" stroke-width="2"/><path d="M1 2L8 10M4 1L11 8" stroke="#ddd" stroke-width=".8"/><circle cx="10" cy="11" r="4" fill="#ddd" stroke="#222" stroke-width="1.300"/><circle cx="10" cy="11" r="1.500" fill="#fff" stroke="#222"/><path d="M10 5L15 1M14 5V8" stroke="#333" stroke-dasharray="2 1"/></svg>
    <span class="s-scale">Scale</span>
    <div class="field scale"><span>1:5921112</span><b class="combo"></b></div>
    <svg class="lock" viewBox="0 0 14 16"><path d="M3.500 8V5Q3.500 1.500 7 1.500Q10.500 1.500 10.500 5V8" fill="none" stroke="#888" stroke-width="1.700"/><rect x="1" y="7" width="12" height="8.500" rx="1" fill="#555"/></svg>
    <span class="s-mag">Magnifier</span>
    <div class="field mag"><span>100%</span><b class="spin"></b></div>
    <span class="s-rot">Rotation</span>
    <div class="field rot"><span>0,0 °</span><b class="spin"></b></div>
    <i class="check status-check"><svg viewBox="0 0 12 12"><path d="M3 5.500L5 9.500L9.500 2" fill="none" stroke="#000" stroke-width="1.800"/></svg></i>
    <span class="s-render">Render</span>
    <svg class="crs" viewBox="0 0 16 16"><path d="M1 8L4.500 2.500Q8 0 11.500 2.500L15 8L11.500 13Q8 16 4.500 13Z" fill="#777"/><path d="M0 8H16M8 0V16M3 5H13M3 11H13M5.500 1Q3.500 8 5.500 15M10.500 1Q12.500 8 10.500 15" fill="none" stroke="#e6e6e6" stroke-width=".7"/></svg>
    <span class="s-epsg">EPSG:4326</span>
    <svg class="messages" viewBox="0 0 16 16"><ellipse cx="8" cy="7" rx="7.700" ry="6" fill="#585858"/><path d="M9 11L13.500 15.500L13 9Z" fill="#585858"/><path d="M4 7H6M7.200 7H9.200M10.400 7H12.400" stroke="#fff" stroke-width="1.700"/></svg>
  </footer>
  <div class="taskbar"><i class="start"></i><i class="search"></i><i class="apps"></i><i class="current"></i></div>
</div>
</body>
</html>
```
FILE: styles.css
```css
* { box-sizing: border-box; }
body { margin: 0; font: 11.5px/18px "Open Sans", "Noto Sans", sans-serif; color: #000; background: #efefef; }
i, b { font-style: normal; font-weight: normal; }
ul { list-style: none; margin: 0; padding: 0; }
svg { display: block; flex: none; }
.defs { position: absolute; }
.window { width: 1366px; height: 731px; display: flex; flex-direction: column; overflow: hidden; white-space: nowrap; }

.titlebar { height: 23px; background: #fff; display: flex; align-items: center; padding-left: 2px; }
.logo { width: 16px; height: 16px; margin-right: 5px; }
.title { flex: 1; letter-spacing: -0.2px; word-spacing: 0.8px; }
.win-buttons { display: flex; gap: 34px; padding: 0 19px 3px 0; }
.win-buttons svg { width: 12px; height: 12px; }

.menubar { height: 20px; display: flex; gap: 14px; padding-left: 10px; background: #efefef; border-bottom: 1px solid #d6d6d6; letter-spacing: -0.12px; line-height: 20px; }
.menubar u { text-underline-offset: 2px; text-decoration-thickness: 1px; }

.toolbar { height: 39px; display: flex; align-items: center; background: linear-gradient(#fafafa, #eeeeee); border-bottom: 1px solid #b4b4b4; }
.toolbar.second { height: 40px; border-bottom: 2px solid #b8b8b8; }
.tool { width: 33px; height: 32px; display: flex; align-items: center; padding-left: 4px; flex: none; }
.tool svg { width: 24px; height: 24px; overflow: visible; }
.tool.drop { width: 45px; }
.tool.drop::after { content: ""; margin-left: 5px; border: 4px solid transparent; border-top-color: #555; border-bottom: 0; }
.tool.drop.dim::after { border-top-color: #aaa; }
.toolbar.second .tool.drop::after { border-top-color: #888; }
.framed, .pressed { width: 32px; margin-right: 1px; border: 1px solid #b0b0b0; border-radius: 2px; padding-left: 3px; }
.framed { background: #fff; }
.pressed { background: #dcdcdc; }
.off { opacity: .33; }
.gray { filter: grayscale(1); }
.grip { width: 16px; flex: none; display: flex; padding-left: 7px; }
.grip::before { content: ""; width: 5px; height: 18px; background: radial-gradient(circle at 0.5px 0.5px, #bbb 0.7px, transparent 0.8px) 0 0 / 2px 3px; }
.grip.first { width: 13px; padding-left: 5px; }
.grip.g14 { width: 14px; }
.grip.g15 { width: 15px; padding-left: 6px; }
.grip.g17 { width: 17px; padding-left: 8px; }
.sep { width: 7px; height: 28px; flex: none; border-left: 1px solid #d2d2d2; margin: 0 -3px 0 3px; }
.sep.wide { width: 7px; margin: 0 -3px 0 5px; }
.sep.tail { width: 6px; margin: 0 -4px 0 4px; }
.abc { font: bold 7.5px "DejaVu Sans", sans-serif; fill: #222; letter-spacing: -.3px; }
.abc.red { fill: #e01015; }
.letter-a { font: 11px "DejaVu Sans", sans-serif; fill: #444; }

.workspace { height: 578px; display: flex; }
.docks { width: 294px; display: flex; flex-direction: column; }
.dock-title { margin: 0; height: 17px; padding: 0 2px 0 4px; display: flex; align-items: center; gap: 3px; font-size: 11.5px; font-weight: normal; letter-spacing: -0.2px; }
.dock-title span { flex: 1; }
.dock-title svg { width: 11px; height: 11px; }
.dock-tools { height: 32px; display: flex; align-items: center; gap: 9px; padding-left: 8px; }
.dock-tools svg { width: 16px; height: 16px; overflow: visible; }
.dock-tools .wide { width: 18px; margin-right: -1px; }
.caret { border: 4px solid transparent; border-top-color: #555; border-bottom: 0; margin: 0 -1px 0 -4px; }
.tree { height: 337px; padding-top: 1px; background: #fff; border: 1px solid #b4b4b4; }
.tree li { height: 18px; display: flex; align-items: center; padding-left: 5px; letter-spacing: -0.18px; word-spacing: 0.8px; }
.tree li span { line-height: 16px; height: 18px; }
.tree .caps { letter-spacing: 0.3px; }
.tree .snug { letter-spacing: -0.28px; word-spacing: 0; }
.tree li i { width: 14px; }
.tree li i::before { content: ""; display: block; width: 0; }
.tree li .closed::before { border: 4px solid transparent; border-left: 5px solid #555; border-right: 0; margin: 0 0 2px 1px; }
.tree li svg { width: 16px; height: 16px; margin: 0 6px 2px 0; }
.splitter { height: 7px; padding: 0 0 2px 2px; display: flex; justify-content: center; align-items: center; }
.splitter i { width: 17px; height: 1px; background: repeating-linear-gradient(90deg, #bbb 0 1px, transparent 1px 3px); }
.layers .dock-title { height: 19px; }
.layers .dock-tools { height: 31px; padding-bottom: 1px; }

.layer-panel { height: 136px; display: flex; background: #fff; border: 1px solid #b4b4b4; overflow: hidden; }
.layer-list { flex: 1; }
.layer-list li { height: 18px; display: flex; align-items: center; padding: 0 5px 0 23px; color: #777; font-weight: bold; font-style: italic; }
.layer-list li.active { color: #000; font-style: normal; letter-spacing: -0.3px; }
.layer-list span { flex: 1; height: 18px; line-height: 20px; }
.layer-list li > svg { width: 16px; height: 16px; }
.check { width: 14px; height: 14px; border: 1px solid #b4b4b4; background: #fff; flex: none; }
.check svg { width: 12px; height: 12px; }
.swatch { width: 16px; height: 16px; margin: 0 6px; border: 1px solid #555; }
.c10 { background: #b7484b; border-color: #803234; }
.c9 { background: #e77148; border-color: #a14f32; }
.c8 { background: #987db7; border-color: #6a5780; }
.c6 { background: #e15989; border-color: #9d3e60; }
.stroke { width: 14px; height: 2px; margin: 0 6px; }
.s7 { background: #c6d96f; }
.s5 { background: #e8bd58; }
.point { width: 8px; height: 8px; margin: 0 10px; border-radius: 50%; background: #b7342f; border: 1px solid #702f2c; }
.none { width: 16px; margin: 0 6px; }
.scrollbar { width: 14px; border-left: 1px solid #b4b4b4; background: #dedede; display: flex; flex-direction: column; }
.scrollbar i { background: #fafafa; }
.up, .down { height: 14px; padding: 0 1px 1px 0; display: flex; justify-content: center; align-items: center; }
.up::before, .down::before { content: ""; border: 4px solid transparent; }
.up::before { border-bottom-color: #555; border-top: 0; }
.down::before { border-top-color: #555; border-bottom: 0; }
.thumb { height: 72px; border: solid #b4b4b4; border-width: 1px 0; }
.down { margin-top: auto; border-top: 1px solid #b4b4b4; }

.v-splitter { width: 6px; display: flex; align-items: center; padding-left: 3px; }
.v-splitter i { width: 1px; height: 17px; background: repeating-linear-gradient(#bbb 0 1px, transparent 1px 3px); }
.canvas { flex: 1; display: grid; background: #fff; border: solid #b4b4b4; border-width: 0 1px 1px 1px; }
.map { grid-area: 1 / 1; width: 1064px; height: 577px; }
.watermark { grid-area: 1 / 1; align-self: end; justify-self: start; padding: 0 0 4px 772px; color: #bfbfbf; }
.watermark p { margin: 0; }
.w1 { font-size: 18.5px; line-height: 24px; letter-spacing: 0.3px; }
.w2 { font-size: 13.5px; line-height: 21px; letter-spacing: 0.22px; word-spacing: 1.4px; }

.statusbar { height: 28px; display: flex; align-items: center; padding-left: 4px; font: 11px/18px "DejaVu Sans Condensed", "DejaVu Sans", sans-serif; letter-spacing: -0.1px; }
.statusbar > * { flex: none; }
.statusbar > span { padding-top: 2px; }
.locator { width: 200px; height: 22px; border: 1px solid #a9a9a9; border-radius: 3px; background: #fff; display: flex; align-items: center; padding-left: 8px; color: #6b6b6b; margin-right: 394px; }
.locator svg { width: 13px; height: 13px; margin-right: 6px; }
.locator span { padding-top: 2px; }
.field { height: 22px; border: 1px solid #a9a9a9; border-radius: 3px; background: #fff; display: flex; align-items: stretch; justify-content: space-between; line-height: 22px; padding-left: 4px; }
.s-coord { width: 57px; }
.coord { width: 70px; justify-content: center; padding-left: 0; }
.extent { width: 16px; height: 16px; margin: 0 12px 0 4px; }
.s-scale { width: 29px; }
.scale { width: 81px; padding-left: 3px; }
.combo { width: 20px; border-left: 1px solid #b4b4b4; background: linear-gradient(#fff, #eee); display: flex; align-items: center; justify-content: center; }
.combo::before { content: ""; border: 4px solid transparent; border-top-color: #555; border-bottom: 0; }
.lock { width: 14px; height: 16px; margin: 0 7px 0 11px; }
.s-mag { width: 48px; }
.mag { width: 84px; margin-right: 8px; }
.s-rot { width: 51px; }
.rot { width: 84px; margin-right: 6px; }
.spin { width: 14px; border-left: 1px solid #b4b4b4; display: flex; flex-direction: column; align-items: center; justify-content: center; gap: 3px; }
.spin::before, .spin::after { content: ""; border: 3.5px solid transparent; }
.spin::before { border-bottom: 4px solid #555; border-top: 0; }
.spin::after { border-top: 4px solid #555; border-bottom: 0; }
.status-check { margin-right: 4px; }
.s-render { width: 51px; }
.crs { width: 16px; height: 16px; }
.s-epsg { width: 78px; }
.messages { width: 16px; height: 16px; }

.taskbar { height: 3px; display: flex; background: #151515; }
.start { width: 48px; }
.search { width: 344px; background: #f0f0f0; border-top: 1px solid #ccc; }
.apps { width: 393px; }
.current { width: 48px; background: #4a4a4a; }
```
